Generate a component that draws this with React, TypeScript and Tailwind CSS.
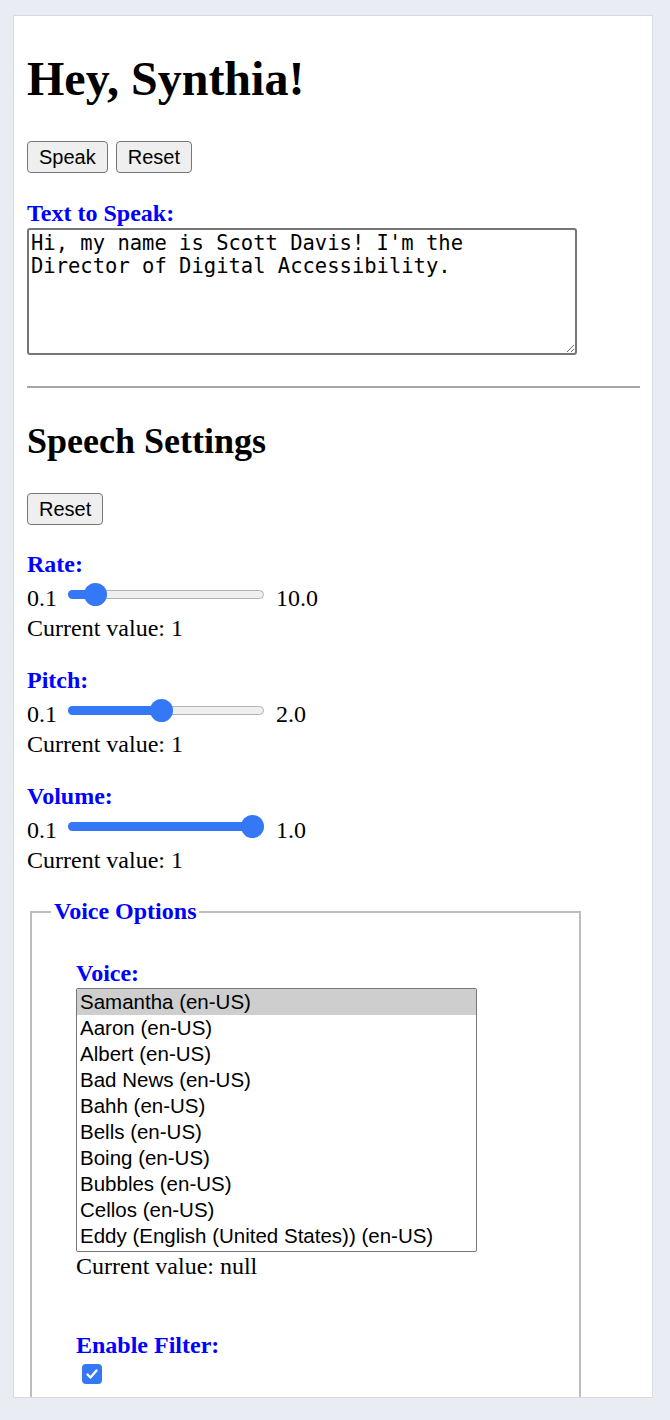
import React from 'react';

const serif = "font-['Liberation_Serif',_'Times_New_Roman',_serif]";
const sans = "font-['Liberation_Sans',_Arial,_sans-serif]";

const voices = [
    'Samantha (en-US)',
    'Aaron (en-US)',
    'Albert (en-US)',
    'Bad News (en-US)',
    'Bahh (en-US)',
    'Bells (en-US)',
    'Boing (en-US)',
    'Bubbles (en-US)',
    'Cellos (en-US)',
    'Eddy (English (United States)) (en-US)',
];

const sliders = [
    { name: 'Rate', min: 0.1, max: 10, value: 1, gap: 'mt-[26px]' },
    { name: 'Pitch', min: 0.1, max: 2, value: 1, gap: 'mt-[25px]' },
    { name: 'Volume', min: 0.1, max: 1, value: 1, gap: 'mt-[25px]' },
];

const Button: React.FC<{ children: React.ReactNode }> = ({ children }) => (
    <button
        className={`${sans} h-[32px] px-[11px] text-[20px] leading-[23px] text-black bg-[#efefef] border border-[#767676] rounded-[4px]`}
    >
        {children}
    </button>
);

const Label: React.FC<{ children: React.ReactNode; className?: string }> = ({ children, className = '' }) => (
    <label className={`block font-bold text-[24px] leading-[27px] text-[#0000ff] ${className}`}>{children}</label>
);

const Slider: React.FC<{ frac: number }> = ({ frac }) => {
    // track is 196px, thumb is 23px
    const left = frac * (196 - 23);
    return (
        <div className="relative w-[196px] h-[23px] -mt-[2px] ml-[11px] shrink-0">
            <div className="absolute left-0 right-0 top-[7px] h-[9px] rounded-full bg-[#efefef] border border-[#b2b2b2]" />
            <div className="absolute left-0 top-[7px] h-[9px] rounded-full bg-[#3478f6]" style={{ width: left + 12 }} />
            <div className="absolute top-0 w-[23px] h-[23px] rounded-full bg-[#3478f6]" style={{ left }} />
        </div>
    );
};

export default function App() {
    return (
        <div className={`${serif} min-h-[1420px] bg-[#e9ecf3] pt-[15px] pl-[13px] text-black`}>
            <div className="w-[640px] h-[1383px] overflow-hidden bg-white border border-[#d7dae1] pl-[13px] pr-[12px]">
                <h1 className="mt-[35px] text-[48px] leading-[55px] font-bold">Hey, Synthia!</h1>

                <div className="mt-[35px] flex gap-[8px]">
                    <Button>Speak</Button>
                    <Button>Reset</Button>
                </div>

                <Label className="mt-[27px]">Text to Speak:</Label>
                <textarea
                    className="block mt-[1px] w-[550px] h-[127px] p-[2px] border-2 border-[#767676] rounded-[3px] font-['DejaVu_Sans_Mono',_monospace] text-[20.5px] leading-[23.3px] text-black resize"
                    defaultValue="Hi, my name is Scott Davis! I'm the Director of Digital Accessibility."
                />

                <div className="mt-[31px] h-0 border-t-2 border-[#a6a6a6]" />

                <h2 className="mt-[33px] text-[36px] leading-[41px] font-bold">Speech Settings</h2>

                <div className="mt-[31px] flex">
                    <Button>Reset</Button>
                </div>

                {sliders.map((s) => (
                    <div key={s.name} className={s.gap}>
                        <Label>{s.name}:</Label>
                        <div className="mt-[7px] flex items-start text-[24px] leading-[27px]">
                            <span>0.1</span>
                            <Slider frac={(s.value - s.min) / (s.max - s.min)} />
                            <span className="ml-[12px]">{s.max.toFixed(1)}</span>
                        </div>
                        <div className="mt-[3px] text-[24px] leading-[27px]">Current value: {s.value}</div>
                    </div>
                ))}

                <fieldset className="mt-[24px] ml-[3px] w-[551px] border-2 border-[#bdbdbd] pl-[19px] pr-[19px]">
                    <legend className="px-[3px] font-bold text-[24px] leading-[27px] text-[#0000ff]">Voice Options</legend>
                    <div className="pt-[35px] pl-[25px] pb-[60px]">
                        <Label>Voice:</Label>
                        <div className={`${sans} mt-[1px] w-[401px] h-[264px] border border-[#767676] rounded-[2px] text-[20.5px] text-black`}>
                            {voices.map((v, i) => (
                                <div
                                    key={v}
                                    className={`h-[26px] px-[3px] leading-[25px] whitespace-nowrap ${i === 0 ? 'bg-[#cecece]' : ''}`}
                                >
                                    {v}
                                </div>
                            ))}
                        </div>
                        <div className="mt-[1px] text-[24px] leading-[27px]">Current value: null</div>

                        <Label className="mt-[52px]">Enable Filter:</Label>
                        <div className="mt-[5px] ml-[6px] w-[20px] h-[20px] rounded-[4px] bg-[#3478f6] flex items-center justify-center">
                            <svg width="14" height="14" viewBox="0 0 14 14" fill="none">
                                <path d="M2.5 7.5 L5.5 10.5 L11.5 3.5" stroke="white" strokeWidth="2.4" strokeLinecap="round" strokeLinejoin="round" />
                            </svg>
                        </div>
                    </div>
                </fieldset>
            </div>
        </div>
    );
}
